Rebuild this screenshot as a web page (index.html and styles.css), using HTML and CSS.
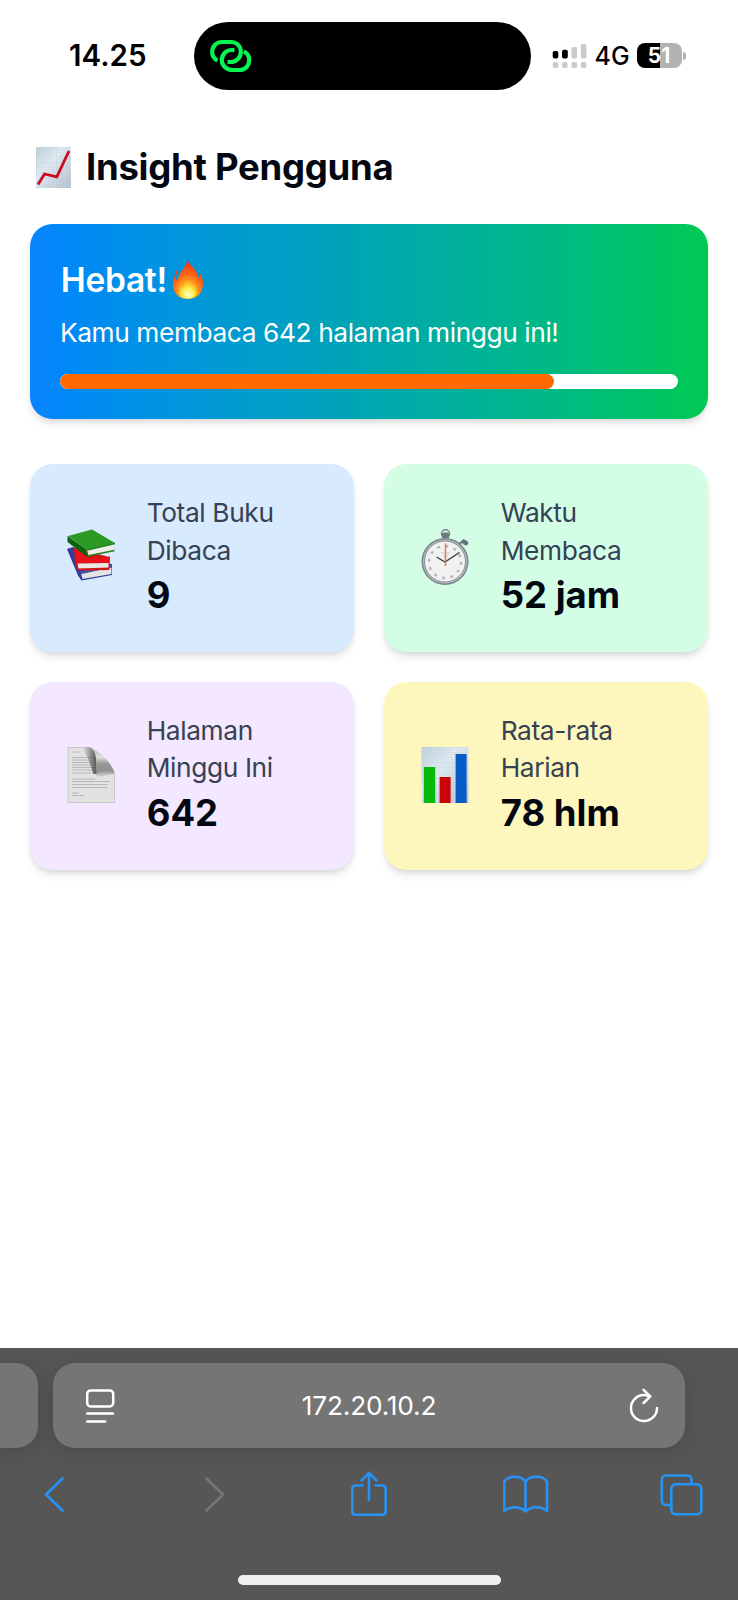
FILE: index.html
```html
<!DOCTYPE html>
<html lang="id">
<head>
<meta charset="utf-8">
<title>Insight Pengguna</title>
<link rel="stylesheet" href="styles.css">
</head>
<body>
<div class="screen">
  <header class="status">
    <div class="time">14.25</div>
    <div class="island">
      <svg class="link-icon" width="44" height="36" viewBox="0 0 44 36" fill="none" stroke="#04f651" stroke-width="4.2">
        <path d="M8.6 22.6C4.800 20.600 3.200 17.600 3.200 14.200C3.200 8 7.500 4 13 4H22C28 4 31.800 8.500 31.800 13.700C31.800 19.500 27.500 24 22 24H18.500"/>
        <path d="M34.800 13.400C38.600 15.400 40.200 18.400 40.200 21.800C40.200 28 36 32 30.500 32H23.500C17.500 32 12.800 27.500 12.800 22.300C12.800 16.500 17 12 22.500 12H25.500"/>
      </svg>
    </div>
    <div class="indicators">
      <svg width="35" height="26" viewBox="0 0 35 26">
        <g fill="#000"><rect x="0.700" y="8" width="5.600" height="7.500" rx="1.800"/><rect x="10" y="6.800" width="5.800" height="8.700" rx="1.800"/></g>
        <g fill="#cacaca"><rect x="19.500" y="4" width="5.600" height="11.500" rx="1.800"/><rect x="28.800" y="1" width="5.600" height="14.500" rx="1.800"/><rect x="0.700" y="19" width="5.600" height="6" rx="1.800"/><rect x="10" y="19" width="5.600" height="6" rx="1.800"/><rect x="19.500" y="19" width="5.600" height="6" rx="1.800"/><rect x="28.800" y="19" width="5.600" height="6" rx="1.800"/></g>
      </svg>
      <span class="network">4G</span>
      <span class="battery">51</span>
      <span class="nub"></span>
    </div>
  </header>

  <main class="page">
    <h1 class="title">
      <svg width="35" height="41" viewBox="0 0 35 41">
        <defs>
          <linearGradient id="paper" x1="0" y1="0" x2="1" y2="1"><stop offset="0" stop-color="#c3d3dd"/><stop offset=".4" stop-color="#e3edf3"/><stop offset="1" stop-color="#b7c3cf"/></linearGradient>
          <pattern id="grid" width="2.500" height="2.500" patternUnits="userSpaceOnUse"><path d="M0 0H2.500M0 0V2.500" stroke="#9fb4c8" stroke-width=".6" stroke-opacity=".5"/></pattern>
        </defs>
        <rect width="35" height="41" fill="url(#paper)"/><rect width="35" height="41" fill="url(#grid)"/>
        <path d="M2 37.500L8.500 27L20.800 29.800L33 4" fill="none" stroke="#cf0a20" stroke-width="2.800"/>
      </svg>
      <span>Insight Pengguna</span>
    </h1>

    <section class="hero">
      <h2 class="hero-title"><span>Hebat!</span>
        <svg width="32" height="40" viewBox="0 0 32 40">
          <defs>
            <radialGradient id="flame" cx=".5" cy=".86" r=".8"><stop offset="0" stop-color="#ffe83a"/><stop offset=".3" stop-color="#ffb51f"/><stop offset=".6" stop-color="#ff6a14"/><stop offset="1" stop-color="#f5330d"/></radialGradient>
            <radialGradient id="core" cx=".5" cy=".85" r=".7"><stop offset="0" stop-color="#fffbd0"/><stop offset=".45" stop-color="#fff04a"/><stop offset="1" stop-color="#ffb020" stop-opacity="0"/></radialGradient>
          </defs>
          <path d="M15.500 0C17 5 25.500 9 26 18C28 17 28.500 14.500 28.300 13C31 18 31.500 23 30.500 28C29 35 23 39 16 39C8 39 2.500 35 1.200 27C.5 22 1 18.500 2.600 15.500C3 18 4 20 6 21C5.500 13 14.500 8 15.500 0Z" fill="url(#flame)"/>
          <path d="M5.500 16C1.500 13.500 4 11 6.200 9C5.400 12 6.800 13.500 5.500 16Z" fill="#e8471c"/>
          <path d="M16 16C17.500 20 20.500 22 21 26C22.500 25.500 23.500 24 23.500 22.500C26.500 29 26 38.500 16 38.500C6 38.500 5.500 30 8.500 24C9 26 10 27 11.500 27.500C11.500 23 15.500 21 16 16Z" fill="url(#core)"/>
        </svg>
      </h2>
      <p class="hero-text">Kamu membaca 642 halaman minggu ini!</p>
      <div class="track"><div class="fill" style="width:80%"></div></div>
    </section>

    <section class="tiles">
      <article class="tile blue">
        <svg class="tile-icon" width="48" height="56" viewBox="0 0 48 56">
          <path d="M0 20L6 18L34 30L45 35.500V46L14.500 51.500L11 46.500Z" fill="#303d99"/>
          <path d="M14 44.500L44.500 38.500V45L15.500 50Z" fill="#e4e4e2"/><path d="M12 42L44 36L45.500 38L15 45Z" fill="#4850a5"/>
          <path d="M7 18.500L42 28L42.500 41L11 41.500L8 34Z" fill="#d41216"/>
          <path d="M10.500 34.500L41.500 34V38.500L11.500 39.500Z" fill="#ece8e3"/><path d="M7 19L24 30L43 27.500V33.500L9.500 34Z" fill="#ec1116"/>
          <path d="M1 7L25 .5L48 14L20 21Z" fill="#2b9924"/>
          <path d="M20 21L46.500 15.500V21L21.500 26.500Z" fill="#eeeee7"/>
          <path d="M.5 7V13L19.500 27.500L21.500 26.500L19 23L20 21Z" fill="#0b640f"/>
          <path d="M20.500 27L47.500 21.500M20 21L48 14.500" stroke="#1d7f20" stroke-width="1.300"/>
        </svg>
        <div><p class="label">Total Buku Dibaca</p><p class="value">9</p></div>
      </article>
      <article class="tile green">
        <svg class="tile-icon" width="48" height="56" viewBox="0 0 48 56">
          <circle cx="24.500" cy="4.800" r="4" fill="none" stroke="#7b8589" stroke-width="1.500"/><rect x="21" y="3.500" width="7" height="6" rx="1.500" fill="#6e7a7e"/>
          <path d="M37 16L43 11" stroke="#647177" stroke-width="2"/><ellipse cx="44" cy="13.500" rx="3.500" ry="2.300" transform="rotate(35 44 13.500)" fill="#63747a"/>
          <circle cx="24" cy="32.500" r="23.500" fill="#7b858d"/><circle cx="24" cy="32.500" r="22" fill="#b9bfc4"/><circle cx="24" cy="32.500" r="20.500" fill="#f1f1f2" stroke="#6a6f74" stroke-width=".7"/>
          <circle cx="24" cy="33" r="16" fill="none" stroke="#b5b5b8" stroke-width="2.400" stroke-dasharray="2.800 5.577"/>
          <path d="M20 24H29M22 27H27" stroke="#ccc" stroke-width="1"/>
          <path d="M15.500 28L24 33L38.500 23.500" fill="none" stroke="#343b40" stroke-width="1.400"/><path d="M24.500 14.500V37" stroke="#f46c4b" stroke-width="1.400"/>
        </svg>
        <div><p class="label">Waktu Membaca</p><p class="value">52 jam</p></div>
      </article>
      <article class="tile purple">
        <svg class="tile-icon" width="48" height="56" viewBox="0 0 48 56">
          <defs>
            <linearGradient id="fold" x1="0" y1="1" x2="0" y2="0"><stop offset="0" stop-color="#8d8d8d"/><stop offset=".4" stop-color="#999"/><stop offset=".65" stop-color="#dcdcdc"/><stop offset="1" stop-color="#b5b5b5"/></linearGradient>
            <linearGradient id="shade-top" x1="0" y1="0" x2="1" y2="0"><stop offset="0" stop-color="#666" stop-opacity="0"/><stop offset="1" stop-color="#555"/></linearGradient>
            <linearGradient id="shade-low" x1="0" y1="0" x2="0" y2="1"><stop offset="0" stop-color="#666" stop-opacity=".75"/><stop offset="1" stop-color="#666" stop-opacity="0"/></linearGradient>
          </defs>
          <path d="M1 .5H22C28 1 30 6 30 17C40 17 47 20 47.500 27V55.500H1Z" fill="#e2e2e1" stroke="#c9c9c9"/>
          <path d="M5 5H12M5 10.500H28M5 13H28M5 15.500H27M5 18H29M5 20.500H30M5 23H28M5 26H24M5 32H28M5 34.500H43M5 37.500H41M5 40.500H40M5 46H12M5 48.500H17" stroke="#b2b2b2" stroke-width=".9"/>
          <path d="M15 .5H22C28 2 30 8 29.500 27H26C24 18 20 8 15 .5Z" fill="url(#shade-top)"/>
          <path d="M28 22H44L47.500 27C42 27 36 29 30 31Z" fill="url(#shade-low)"/>
          <path d="M23 1C29 3 30.500 9 29.500 27C34 23 44 22 47.500 27C46 17 33 4 23 1Z" fill="url(#fold)"/>
        </svg>
        <div><p class="label">Halaman Minggu Ini</p><p class="value">642</p></div>
      </article>
      <article class="tile yellow">
        <svg class="tile-icon" width="48" height="56" viewBox="0 0 48 56">
          <rect x=".5" width="47" height="56" fill="url(#paper)"/><rect x=".5" width="47" height="56" fill="url(#grid)"/>
          <rect x="2.800" y="20" width="11.400" height="36" fill="#05ba0b"/><rect x="18.600" y="30" width="11" height="26" fill="#cb0307"/><rect x="34.600" y="7" width="11" height="49" fill="#075cc5"/>
        </svg>
        <div><p class="label">Rata-rata Harian</p><p class="value">78 hlm</p></div>
      </article>
    </section>
  </main>

  <footer class="browser">
    <div class="tabs">
      <div class="tab-edge"></div>
      <div class="address">
        <svg width="30" height="36" viewBox="0 0 30 36" fill="none" stroke="#fff" stroke-width="2.500" stroke-linecap="round"><rect x="2.200" y="2.400" width="26" height="16" rx="3.500"/><path d="M2.200 25.400H28M2.200 33.400H20.200"/></svg>
        <span class="url">172.20.10.2</span>
        <svg width="30" height="36" viewBox="0 0 30 36" fill="none" stroke="#fff" stroke-width="2.500" stroke-linecap="round" stroke-linejoin="round"><path d="M19.500 8C18 7.400 16.500 7.100 15 7.100A13 13 0 1 0 28 20"/><path d="M14.600 1.800L21.300 8.300L14.600 15"/></svg>
      </div>
    </div>
    <nav class="tools">
      <svg width="46" height="48" viewBox="0 0 46 48" fill="none" stroke="#2693f4" stroke-width="2.600" stroke-linecap="round" stroke-linejoin="round"><path d="M31.500 7.500L15 23.500L31.500 39.500"/></svg>
      <svg width="46" height="48" viewBox="0 0 46 48" fill="none" stroke="#777" stroke-width="2.600" stroke-linecap="round" stroke-linejoin="round"><path d="M18.500 7.500L35 23.500L18.500 39.500"/></svg>
      <svg width="46" height="48" viewBox="0 0 46 48" fill="none" stroke="#2693f4" stroke-width="2.600" stroke-linecap="round" stroke-linejoin="round"><path d="M16.500 14.500H9.500Q6.300 14.500 6.300 17.700V40.500Q6.300 43.700 9.500 43.700H36.500Q39.700 43.700 39.700 40.500V17.700Q39.700 14.500 36.500 14.500H29.500M23 29V2.500M15.500 9.500L23 1.800L30.500 9.500"/></svg>
      <svg width="46" height="48" viewBox="0 0 46 48" fill="none" stroke="#2693f4" stroke-width="2.600" stroke-linecap="round" stroke-linejoin="round"><path d="M22.500 10.500C18 4.500 5.500 4 1.300 10.500V40C7.500 35 16.500 35 22.500 40.500C28.500 35 37.500 35 44 40V10.500C39.500 4 27 4.500 22.500 10.500ZM22.500 10.500V40.500"/></svg>
      <svg width="46" height="48" viewBox="0 0 46 48" fill="none" stroke="#2693f4" stroke-width="2.600"><rect x="11.300" y="13.300" width="30" height="30" rx="4.500"/><path d="M11.300 34H6.300Q1.800 34 1.800 29.500V9Q1.800 4.500 6.300 4.500H27Q31.500 4.500 31.500 9V13.300"/></svg>
    </nav>
    <div class="home-bar"></div>
  </footer>
</div>
</body>
</html>
```
FILE: styles.css
```css
* { box-sizing: border-box; }
body { margin: 0; background: #fff; font-family: Inter, "Liberation Sans", sans-serif; color: #030712; }
h1, h2, p { margin: 0; }
svg { display: block; flex: none; }
.screen { width: 738px; height: 1600px; display: flex; flex-direction: column; overflow: hidden; }

.status { height: 128px; padding-top: 21.500px; display: flex; align-items: flex-start; flex: none; color: #000; }
.time { width: 194px; padding-left: 69px; font-size: 29.500px; line-height: 66.500px; font-weight: 600; white-space: nowrap; }
.island { width: 336.500px; height: 68.500px; border-radius: 35px; background: #000; padding: 16px 15px; }
.indicators { height: 68px; display: flex; align-items: center; padding-left: 21px; }
.network { margin-left: 8px; width: 42px; font-size: 25px; font-weight: 500; white-space: nowrap; }
.battery { width: 45px; height: 24.500px; border-radius: 8px; background: linear-gradient(90deg, #000 50.500%, #b2b2b2 50.500%); color: #fff; font-size: 21px; line-height: 26px; font-weight: 700; text-align: center; }
.nub { width: 2.500px; height: 8px; margin-left: 1.500px; border-radius: 0 3px 3px 0; background: #b2b2b2; }

.page { flex: 1; padding: 13px 30px 0; }
.title { height: 52px; margin-left: 6px; display: flex; align-items: center; gap: 15px; font-size: 36.500px; font-weight: 700; letter-spacing: -.27px; white-space: nowrap; }

.hero { margin-top: 30.500px; height: 195.500px; padding: 30px; border-radius: 22.500px; color: #fff; background: linear-gradient(to right in oklab, #0a84ff, #00a6b0 50%, #00c950); box-shadow: 0 6px 10px -2px rgba(0,0,0,.12), 0 3px 6px -3px rgba(0,0,0,.1); }
.hero-title { display: flex; align-items: center; gap: 5.500px; height: 52.500px; padding-left: .8px; font-size: 33.500px; font-weight: 600; letter-spacing: -.3px; }
.hero-text { margin-top: 7.500px; font-size: 26.300px; line-height: 37.500px; letter-spacing: -.41px; white-space: nowrap; }
.track { margin-top: 22.500px; height: 15px; border-radius: 8px; background: #fff; overflow: hidden; }
.fill { height: 100%; border-radius: 8px; background: #ff6900; }

.tiles { margin-top: 45px; display: grid; grid-template-columns: 1fr 1fr; gap: 30px; }
.tile { height: 187.800px; padding: 30px 55px 30px 37px; border-radius: 22.500px; display: flex; align-items: center; gap: 31.700px; box-shadow: 0 6px 10px -2px rgba(0,0,0,.12), 0 3px 6px -3px rgba(0,0,0,.1); }
.tile-icon { margin-bottom: 1.500px; }
.blue { background: #d7eafe; }
.green { background: #d3fde5; }
.purple { background: #f3e8ff; }
.yellow { background: #fef7bd; }
.label { font-size: 26.300px; line-height: 37.600px; letter-spacing: -.38px; color: #364153; }
.value { font-size: 36.500px; line-height: 52.600px; font-weight: 700; white-space: nowrap; }

.browser { height: 252px; flex: none; background: #565656; padding-top: 15px; display: flex; flex-direction: column; }
.tabs { display: flex; gap: 15.500px; height: 85px; }
.tab-edge { width: 37.500px; background: #757575; border-radius: 0 22px 22px 0; box-shadow: 0 4px 20px rgba(0,0,0,.14); }
.address { width: 632px; padding: 0 26px 0 32px; display: flex; align-items: center; justify-content: space-between; background: #757575; border-radius: 22px; box-shadow: 0 4px 20px rgba(0,0,0,.14); color: #fff; }
.url { margin-right: 6px; font-size: 26.300px; letter-spacing: -.2px; }
.tools { margin-top: 23px; padding: 0 32px 0 31px; display: flex; justify-content: space-between; height: 48px; }
.home-bar { width: 263px; height: 10px; margin: 56px auto 0; border-radius: 5px; background: #f0f0f0; }
```
